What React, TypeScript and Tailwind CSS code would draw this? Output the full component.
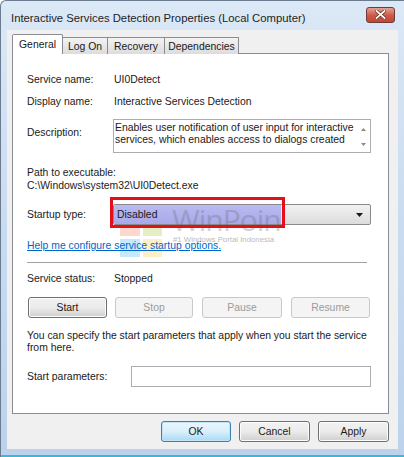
import React from "react";

const font = { fontFamily: '"Liberation Sans", Arial, sans-serif' };

function Btn({ label, disabled, className = "", primary = false }: { label: string; disabled?: boolean; className?: string; primary?: boolean }) {
  return (
    <div
      className={`flex items-center justify-center rounded-[3px] border h-[21px] text-[10.4px] ${
        disabled
          ? "border-[#c9c9c9] bg-[#f4f4f4] text-[#9b9b9b]"
          : primary
          ? "border-[#3c7fb1] bg-gradient-to-b from-[#eaf6fd] via-[#d9f0fc] to-[#a7d9f5] text-[#1a1a1a] shadow-[inset_0_0_0_1px_#c4e5f6]"
          : "border-[#707070] bg-gradient-to-b from-[#f2f2f2] via-[#ebebeb] to-[#cfcfcf] text-[#1a1a1a] shadow-[inset_0_0_0_1px_#fcfcfc]"
      } ${className}`}
    >
      {label}
    </div>
  );
}

export default function App() {
  return (
    <div className="w-[404px] h-[457px] bg-white overflow-hidden" style={font}>
      <div className="relative w-[404px] h-[457px] rounded-tl-[6px] border-l border-t border-[#6b7c91] bg-gradient-to-b from-[#dbe8f6] via-[#c9dbf0] to-[#bcd2ec] flex flex-col">
        {/* title bar */}
        <div className="h-[29px] flex items-center pl-[10px] pr-[9px] shrink-0">
          <div className="text-[11.3px] text-[#1e1e1e] flex-1 pt-[5px] whitespace-nowrap">Interactive Services Detection Properties (Local Computer)</div>
          <div className="w-[29px] h-[16px] mb-[2px] rounded-[3px] border border-[#6f3a37] bg-gradient-to-b from-[#e4a195] via-[#cd5c4b] to-[#c24431] flex items-center justify-center">
            <svg width="11" height="9" viewBox="0 0 11 9">
              <path d="M1.5 1 L9.5 8 M9.5 1 L1.5 8" stroke="#5a2620" strokeWidth="3.2" strokeLinecap="square" />
              <path d="M1.5 1 L9.5 8 M9.5 1 L1.5 8" stroke="#ffffff" strokeWidth="1.8" strokeLinecap="square" />
            </svg>
          </div>
        </div>
        {/* client area */}
        <div className="h-[419px] ml-[6px] mr-[6px] bg-[#f0f0f0] flex flex-col pl-[5px] pr-[9px] pt-[4px] shrink-0">
          {/* tabs */}
          <div className="flex items-end h-[20px] relative z-10">
            <div className="h-[20px] w-[51px] bg-white border border-b-0 border-[#898c95] flex items-center justify-center text-[10.4px] text-[#1a1a1a] rounded-t-[2px]">General</div>
            <div className="h-[17px] w-[45px] bg-gradient-to-b from-[#f3f3f3] to-[#dcdcdc] border border-l-0 border-[#898c95] border-b-0 flex items-center justify-center text-[10.4px] text-[#1a1a1a] pt-[1px]">Log On</div>
            <div className="h-[17px] w-[57px] bg-gradient-to-b from-[#f3f3f3] to-[#dcdcdc] border border-l-0 border-[#898c95] border-b-0 flex items-center justify-center text-[10.4px] text-[#1a1a1a] pt-[1px]">Recovery</div>
            <div className="h-[17px] w-[74px] bg-gradient-to-b from-[#f3f3f3] to-[#dcdcdc] border border-l-0 border-[#898c95] border-b-0 flex items-center justify-center text-[10.4px] text-[#1a1a1a] pt-[1px]">Dependencies</div>
          </div>
          {/* panel */}
          <div className="relative h-[361px] bg-white border border-[#898c95] -mt-[1px] pl-[14px] pt-[19px] text-[10.4px] text-[#1a1a1a]">
            {/* watermark logo (behind) */}
            <div className="absolute left-[107px] top-[164px] grid grid-cols-2 gap-[3px] opacity-[0.22] pointer-events-none">
              <div className="w-[20px] h-[18px] bg-[#f25022]" />
              <div className="w-[19px] h-[18px] bg-[#7fba00]" />
              <div className="w-[20px] h-[18px] bg-[#00a4ef]" />
              <div className="w-[19px] h-[18px] bg-[#ffb900]" />
            </div>

            <div className="relative">
              <div className="flex h-[14px] items-center">
                <div className="w-[87px]">Service name:</div>
                <div>UI0Detect</div>
              </div>
              <div className="flex h-[14px] items-center mt-[8px]">
                <div className="w-[87px]">Display name:</div>
                <div>Interactive Services Detection</div>
              </div>
              <div className="flex mt-[10px] items-start">
                <div className="w-[86px] pt-[6px]">Description:</div>
                <div className="w-[258px] h-[34px] border border-[#abadb3] flex bg-white">
                  <div className="flex-1 pl-[1px] pt-[2px] leading-[12px] overflow-hidden whitespace-nowrap">
                    <div>Enables user notification of user input for interactive</div>
                    <div>services, which enables access to dialogs created</div>
                  </div>
                  <div className="w-[13px] flex flex-col items-center justify-between pt-[8px] pb-[6px]">
                    <svg width="5" height="3" viewBox="0 0 5 3"><path d="M0 3 L2.5 0 L5 3 Z" fill="#8a8a8a" /></svg>
                    <svg width="5" height="3" viewBox="0 0 5 3"><path d="M0 0 L2.5 3 L5 0 Z" fill="#8a8a8a" /></svg>
                  </div>
                </div>
              </div>
              <div className="mt-[13px] h-[13px] leading-[13px]">Path to executable:</div>
              <div className="h-[13px] leading-[13px]">C:\Windows\system32\UI0Detect.exe</div>
              <div className="flex items-center mt-[12px]">
                <div className="w-[86px]">Startup type:</div>
                <div className="relative w-[258px] h-[21px] rounded-[2px] border border-[#8a8a8a] bg-gradient-to-b from-[#f2f2f2] to-[#dcdcdc] flex items-center">
                  <div className="absolute left-0 top-0 bottom-0 w-[167px] bg-gradient-to-b from-[#b9b9f2] to-[#a9a9e8] rounded-l-[2px]" />
                  <div className="relative pl-[3px] flex-1">Disabled</div>
                  <svg className="relative mr-[7px]" width="7" height="4" viewBox="0 0 7 4"><path d="M0 0 L7 0 L3.5 4 Z" fill="#1a1a1a" /></svg>
                </div>
              </div>
              <div className="mt-[14px] text-[#0066cc] underline h-[13px] leading-[13px] relative z-10">Help me configure service startup options.</div>
              <div className="mt-[10px] h-px bg-[#a0a0a0] border-b border-white w-[340px] box-content" />
              <div className="flex h-[14px] items-center mt-[8px]">
                <div className="w-[87px]">Service status:</div>
                <div>Stopped</div>
              </div>
              <div className="flex mt-[11px] pl-[1px]">
                <Btn label="Start" className="w-[79px]" />
                <Btn label="Stop" disabled className="w-[78px] ml-[8px]" />
                <Btn label="Pause" disabled className="w-[80px] ml-[9px]" />
                <Btn label="Resume" disabled className="w-[79px] ml-[9px]" />
              </div>
              <div className="mt-[12px] leading-[12px] whitespace-nowrap">
                <div>You can specify the start parameters that apply when you start the service</div>
                <div>from here.</div>
              </div>
              <div className="flex items-center mt-[12px]">
                <div className="w-[104px]">Start parameters:</div>
                <div className="w-[240px] h-[21px] border border-[#abadb3] bg-white" />
              </div>
            </div>

            {/* watermark text overlay */}
            <div className="absolute left-[159px] top-[151px] text-[30px] leading-none tracking-[-1px] text-[#6a6a6a] opacity-[0.3] whitespace-nowrap pointer-events-none" style={{ fontFamily: '"Open Sans", sans-serif' }}>WinPoin</div>
            <div className="absolute left-[160px] top-[182px] text-[7.8px] leading-none text-[#666] opacity-[0.45] whitespace-nowrap pointer-events-none">#1 Windows Portal Indonesia</div>
            {/* red highlight box */}
            <div className="absolute left-[97px] top-[143px] w-[175px] h-[31px] border-[3px] border-[#e3101a] pointer-events-none" />
          </div>
          {/* bottom buttons */}
          <div className="flex justify-end mt-[7px]">
            <Btn label="OK" primary className="w-[70px]" />
            <Btn label="Cancel" className="w-[71px] ml-[8px]" />
            <Btn label="Apply" className="w-[71px] ml-[8px]" />
          </div>
        </div>
        <div className="absolute left-0 right-0 bottom-0 h-[2px] bg-[#3cb8d4]" />
      </div>
    </div>
  );
}
